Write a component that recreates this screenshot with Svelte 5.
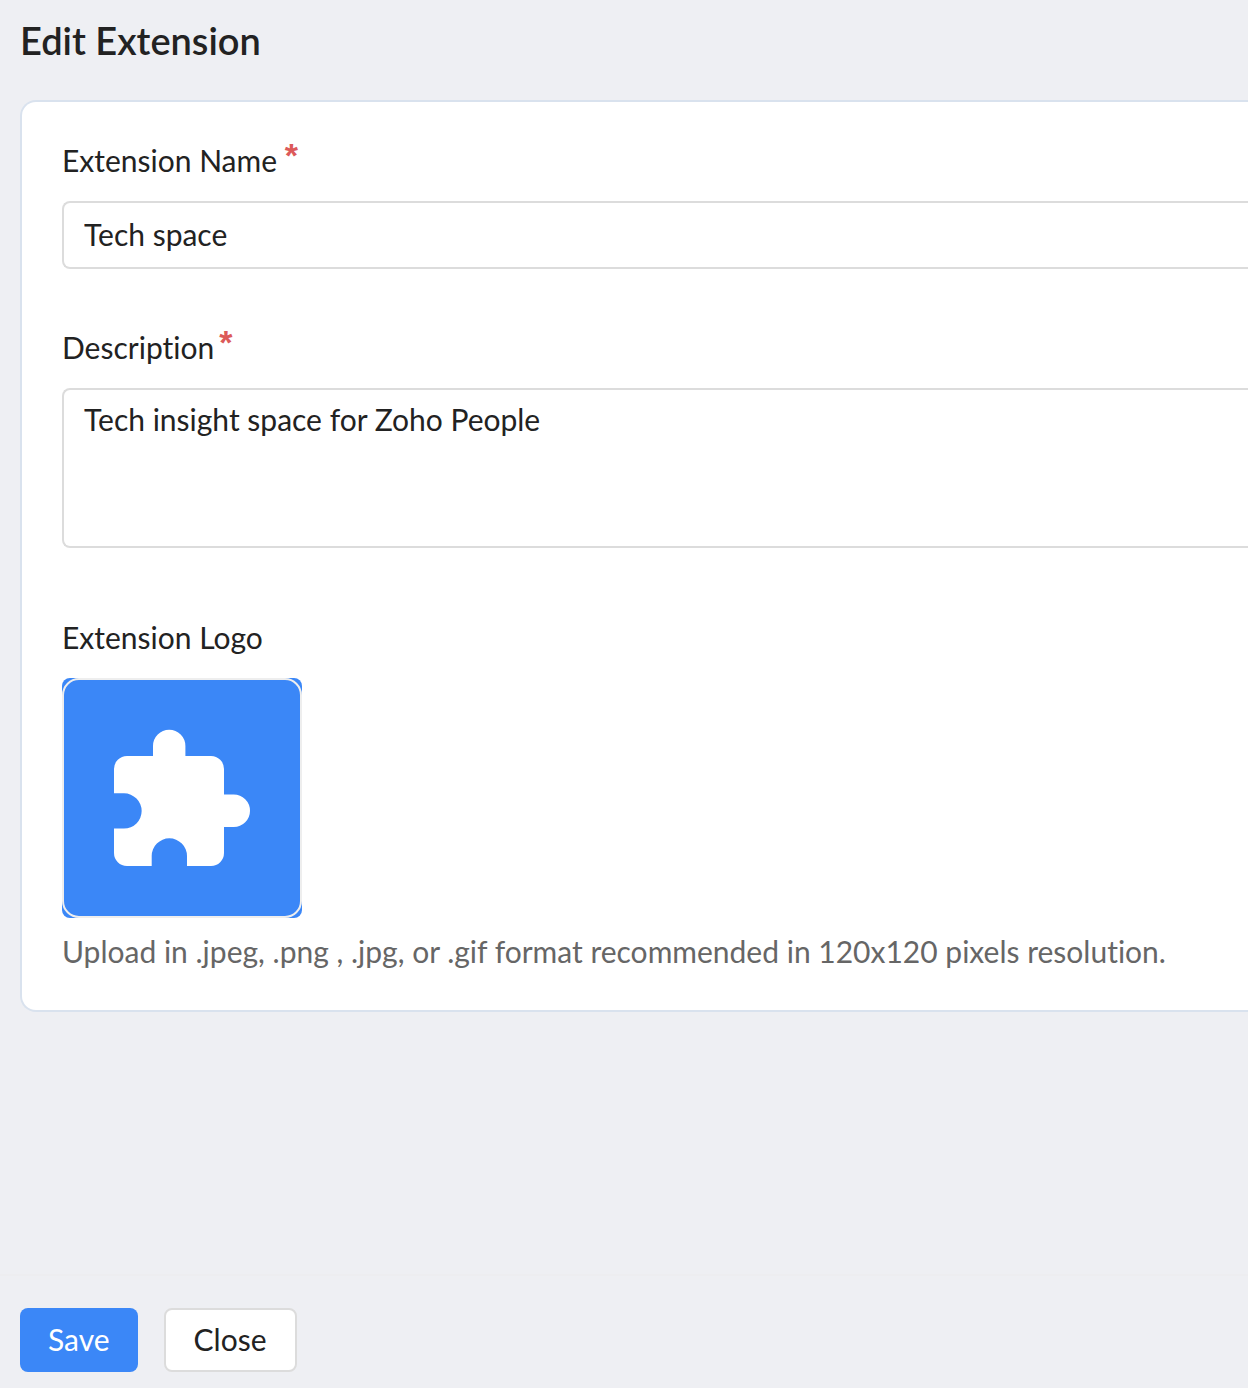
<script>
    let name = "Tech space";
    let description = "Tech insight space for Zoho People";
</script>

<form class="page" on:submit|preventDefault>
    <h1>Edit Extension</h1>

    <div class="card">
        <div class="field">
            <label for="ext-name">Extension Name <span class="required wide">*</span></label>
            <input id="ext-name" type="text" bind:value={name}>
        </div>

        <div class="field field-area">
            <label for="ext-description">Description<span class="required">*</span></label>
            <textarea id="ext-description" bind:value={description}></textarea>
        </div>

        <div class="field logo-field">
            <div class="label">Extension Logo</div>
            <svg class="logo" viewBox="0 0 240 240" role="img" aria-label="Extension Logo">
                <rect width="240" height="240" rx="8" fill="#3b87f7"/>
                <rect x="1" y="1" width="238" height="238" rx="16" fill="none" stroke="#eeeeee" stroke-width="2"/>
                <path fill="#fff" d="M65 78H91V68A16.2 16.2 0 0 1 123.4 68V78H149A13 13 0 0 1 162 91V116.4H171.7A16.3 16.3 0 0 1 171.7 149H162V175A13 13 0 0 1 149 188H125V178A17.65 17.65 0 0 0 89.7 178V188H65A13 13 0 0 1 52 175V150.6H62A17.65 17.65 0 0 0 62 115.3H52V91A13 13 0 0 1 65 78Z"/>
            </svg>
        </div>
        <p>Upload in .jpeg, .png , .jpg, or .gif format recommended in 120x120 pixels resolution.</p>
    </div>

    <div class="footer">
        <button class="save" type="submit">Save</button>
        <button class="close" type="button">Close</button>
    </div>
</form>

<style>
    :global(body) {
        margin: 0;
        background-color: #eeeff3;
    }

    .page {
        display: flex;
        flex-direction: column;
        box-sizing: border-box;
        min-height: 100vh;
        font-family: Lato, sans-serif;
        font-size: 30px;
        font-variant-ligatures: none;
        line-height: 40px;
        color: #222;
    }

    h1 {
        margin: 0;
        padding: 18px 20px 38px;
        font-size: 38px;
        line-height: 44px;
        font-weight: 600;
    }

    /* the card and its fields run to the right edge of the window */
    .card {
        margin-left: 20px;
        padding: 38px 0 39px 40px;
        background-color: #fff;
        border: 2px solid #d9e2ee;
        border-right: none;
        border-radius: 16px 0 0 16px;
    }

    .field {
        display: flex;
        flex-direction: column;
        gap: 21px;
        margin-bottom: 58px;
    }

    .field-area {
        margin-bottom: 69px;
    }

    .logo-field {
        margin-bottom: 13px;
    }

    .required {
        margin-left: 5px;
        font-family: "Liberation Sans", sans-serif;
        font-size: 34px;
        font-weight: 700;
        line-height: 0;
        vertical-align: 5px;
        color: #dc5a5a;
    }

    .wide {
        margin-left: 0;
    }

    input, textarea {
        box-sizing: border-box;
        width: 100%;
        margin: 0;
        font: inherit;
        font-variant-ligatures: none;
        color: inherit;
        background-color: #fff;
        border: 2px solid #dcdcdc;
        border-right: none;
        border-radius: 8px 0 0 8px;
        outline: none;
    }

    input {
        height: 68px;
        padding: 0 20px 2px;
    }

    textarea {
        height: 160px;
        padding: 9px 20px;
        resize: none;
    }

    .logo {
        display: block;
        width: 240px;
        height: 240px;
    }

    p {
        margin: 0;
        color: #666;
    }

    .footer {
        display: flex;
        gap: 26px;
        margin-top: auto;
        padding: 32px 20px 16px;
        border-top: 2px solid #ededf0;
    }

    button {
        height: 64px;
        padding: 0 28px 2px;
        font: inherit;
        border: none;
        border-radius: 8px;
        cursor: pointer;
    }

    .save {
        color: #fff;
        background-color: #3b87f7;
    }

    .close {
        color: #222;
        background-color: #fff;
        border: 2px solid #dcdcdc;
    }
</style>
